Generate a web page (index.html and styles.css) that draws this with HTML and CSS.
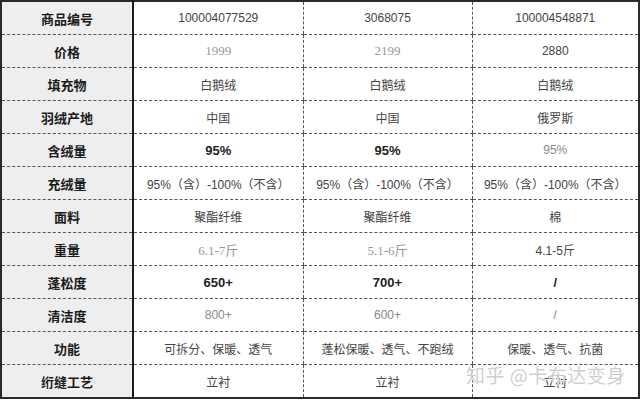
FILE: index.html
```html
<!DOCTYPE html>
<html lang="zh">
<head>
<meta charset="utf-8">
<link rel="stylesheet" href="styles.css">
</head>
<body>
<div class="wrap">
<table class="spec">
  <colgroup><col class="c1"><col class="c2"><col class="c3"><col class="c4"></colgroup>
  <tr><th>商品编号</th><td>100004077529</td><td>3068075</td><td>100004548871</td></tr>
  <tr><th>价格</th><td class="light">1999</td><td class="light">2199</td><td>2880</td></tr>
  <tr><th>填充物</th><td>白鹅绒</td><td>白鹅绒</td><td>白鹅绒</td></tr>
  <tr><th>羽绒产地</th><td>中国</td><td>中国</td><td>俄罗斯</td></tr>
  <tr><th>含绒量</th><td class="b">95%</td><td class="b">95%</td><td class="soft">95%</td></tr>
  <tr><th>充绒量</th><td>95%（含）-100%（不含）</td><td>95%（含）-100%（不含）</td><td>95%（含）-100%（不含）</td></tr>
  <tr><th>面料</th><td>聚酯纤维</td><td>聚酯纤维</td><td>棉</td></tr>
  <tr><th>重量</th><td class="light">6.1-7斤</td><td class="light">5.1-6斤</td><td>4.1-5斤</td></tr>
  <tr><th>蓬松度</th><td class="b">650+</td><td class="b">700+</td><td class="b">/</td></tr>
  <tr><th>清洁度</th><td class="soft">800+</td><td class="soft">600+</td><td class="soft">/</td></tr>
  <tr><th>功能</th><td>可拆分、保暖、透气</td><td>蓬松保暖、透气、不跑绒</td><td>保暖、透气、抗菌</td></tr>
  <tr class="last"><th>绗缝工艺</th><td>立衬</td><td>立衬</td><td>立衬</td></tr>
</table>
<div class="mark">知乎 @卡布达变身</div>
</div>
</body>
</html>
```
FILE: styles.css
```css
html, body { margin: 0; padding: 0; background: #fff; }
.wrap { position: relative; width: 640px; height: 400px; }
.spec {
  width: 638px;
  border-collapse: collapse;
  table-layout: fixed;
  border: 2px solid #2a2a2a;
  font-family: "Liberation Sans", "Noto Sans CJK SC", sans-serif;
}
.c1 { width: 132px; }
.c2 { width: 170px; }
.c3 { width: 169px; }
.c4 { width: 167px; }
.spec th, .spec td {
  height: 32px;
  padding: 0;
  text-align: center;
  vertical-align: middle;
  border-bottom: 1px dashed #555;
  white-space: nowrap;
}
.spec th {
  background: #eeeeee;
  color: #1a1a1a;
  font-family: "Noto Sans CJK SC", sans-serif;
  font-size: 13px;
  font-weight: bold;
  border-right: 2px solid #1a1a1a;
}
.spec td {
  color: #444;
  font-size: 12px;
  border-left: 1px dashed #555;
}
.spec th + td { border-left: 2px solid #1a1a1a; }
.spec tr.last th, .spec tr.last td { border-bottom: 2px solid #2a2a2a; }
.spec td.light {
  color: #999;
  font-family: "Liberation Serif", "Noto Sans CJK SC", serif;
  font-size: 13px;
}
.spec td.b { font-weight: bold; color: #222; font-size: 13px; }
.spec td.soft { color: #888; }
.mark {
  position: absolute;
  left: 466px;
  top: 361px;
  font-family: "Noto Sans CJK SC", sans-serif;
  font-size: 19px;
  color: rgba(185, 185, 185, 0.7);
  text-shadow: 0 0 1px #fff, 0 0 1px #fff;
  letter-spacing: 0.5px;
}
```
